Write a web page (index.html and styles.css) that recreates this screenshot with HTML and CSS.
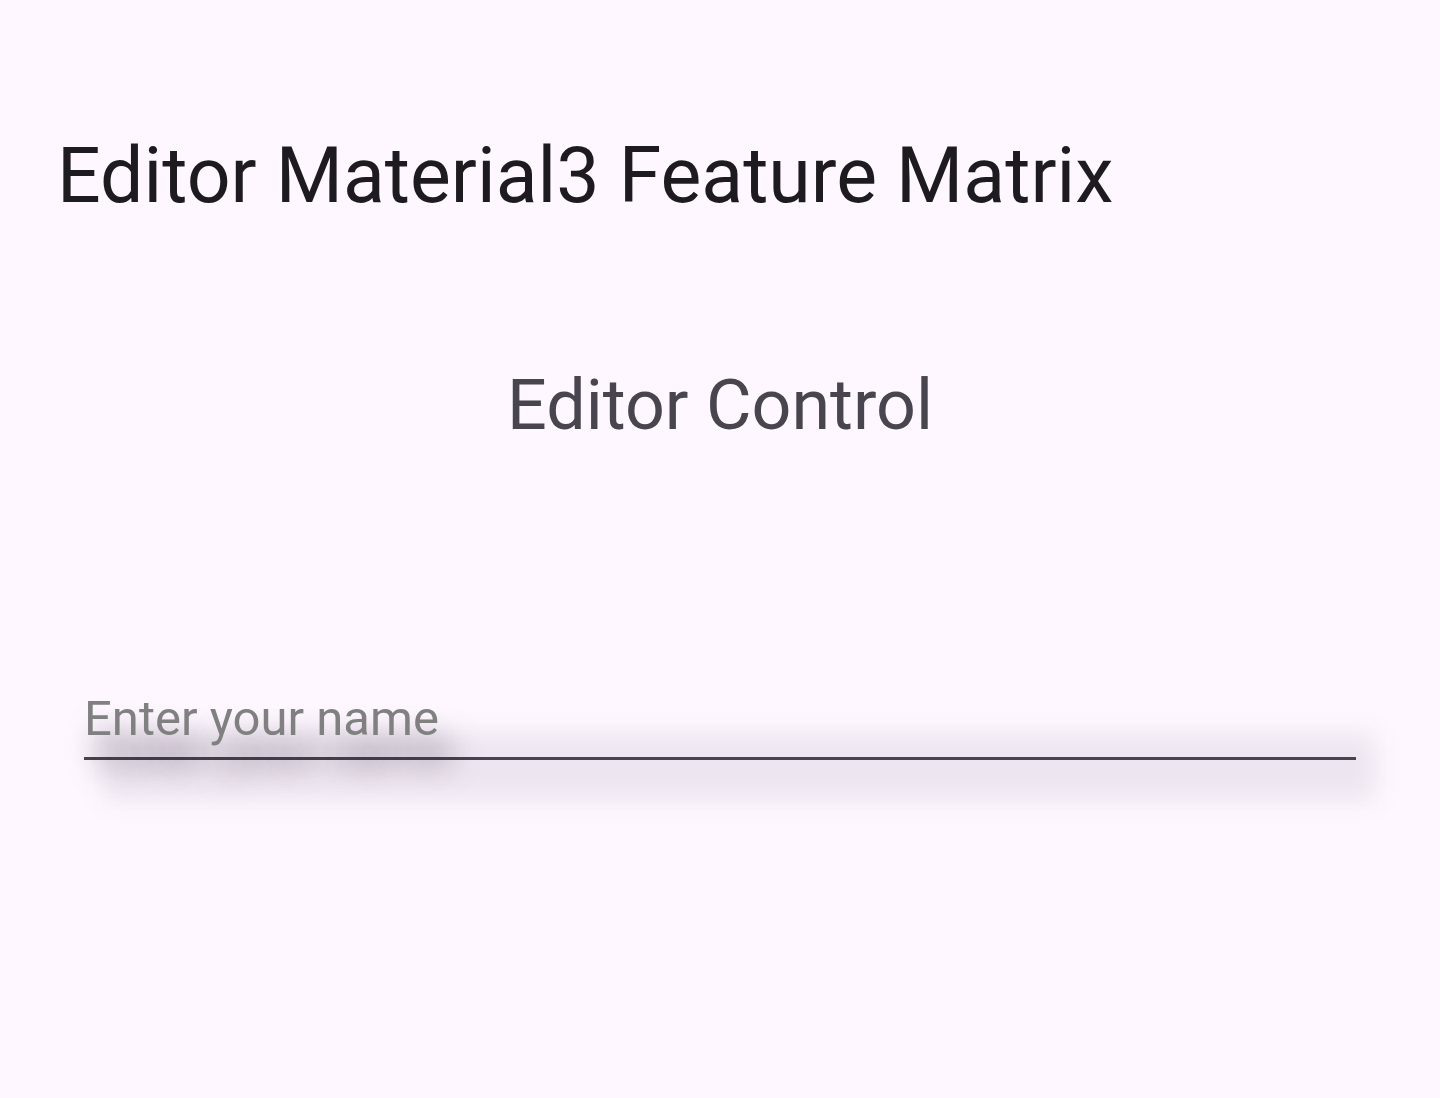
FILE: index.html
```html
<!DOCTYPE html>
<html lang="en">
<head>
    <meta charset="UTF-8">
    <meta name="viewport" content="width=device-width, initial-scale=1.0">
    <title>Editor Material3 Feature Matrix</title>
    <link rel="stylesheet" href="styles.css">
</head>
<body>

    <div class="page">
        <h1 class="title">Editor Material3 Feature Matrix</h1>

        <h2 class="section-title">Editor Control</h2>

        <div class="field" tabindex="0">
            <span class="hint">Enter your name</span>
        </div>
    </div>

</body>
</html>
```

FILE: styles.css
```css
html, body {
    margin: 0;
    padding: 0;
    background-color: #fef7ff;
}
body {
    font-family: Roboto, "Noto Sans", Arial, sans-serif;
    color: #1d1b20;
    min-height: 1098px;
}
.page {
    padding: 0 84px 0 57px;
}
.title {
    margin: 0;
    padding-top: 130px;
    font-size: 77px;
    font-weight: 400;
    line-height: 92px;
    color: #1d1b20;
}
.section-title {
    margin: 0;
    padding-top: 142px;
    text-align: center;
    font-size: 70px;
    font-weight: 400;
    line-height: 82px;
    color: #49454f;
    margin-left: -57px;
    margin-right: -84px;
}
.field {
    position: relative;
    z-index: 0;
    margin-top: 248px;
    margin-left: 27px;
    height: 66px;
    box-sizing: border-box;
    border-bottom: 3px solid #49454f;
    outline: none;
}
/* soft drop shadow of the whole editor box */
.field::before {
    content: "";
    position: absolute;
    top: 0;
    left: 0;
    right: 0;
    bottom: -3px;
    background: rgba(70, 60, 80, 0.09);
    filter: blur(12px);
    transform: translate(20px, 40px);
    z-index: -1;
}
.hint {
    display: block;
    font-size: 49px;
    line-height: 50px;
    color: #808080;
    text-shadow: 12px 30px 30px rgba(40, 30, 50, 0.6);
}
```
